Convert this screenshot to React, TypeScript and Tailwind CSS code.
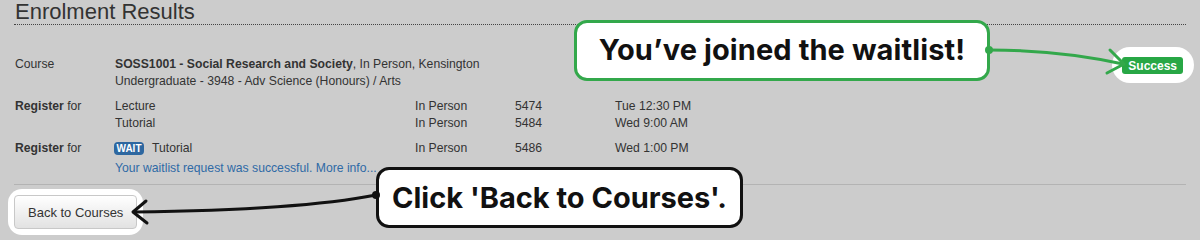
import React from "react";

export default function App() {
  return (
    <div className="relative h-[240px] w-[1200px] overflow-hidden bg-[#cccccc] font-['Liberation_Sans',Arial,sans-serif] text-[12.2px] leading-[17px] text-[#333333]">
      <div className="px-[14px]">
        <h2 className="h-[25px] border-b border-dotted border-[#444] pl-px text-[22px] font-normal leading-[23px] text-[#333]">
          Enrolment Results
        </h2>

        <div className="mt-[31px] pl-px">
          {/* Course row */}
          <div className="flex">
            <div className="w-[100px]">Course</div>
            <div>
              <div>
                <span className="font-bold">SOSS1001 - Social Research and Society</span>, In Person, Kensington
              </div>
              <div>Undergraduate - 3948 - Adv Science (Honours) / Arts</div>
            </div>
            <div className="ml-auto mr-[3px] mt-[1px]">
              <div className="relative inline-block">
                <div className="absolute -bottom-[9px] -left-[10px] -right-[11px] -top-[10px] rounded-[18px] bg-white" />
                <span className="relative flex h-[17px] items-center rounded-[3px] bg-[#28a745] px-[6px] text-[12px] font-bold leading-none text-white">
                  Success
                </span>
              </div>
            </div>
          </div>

          {/* Register row 1 */}
          <div className="mt-[8px] grid grid-cols-[100px_300px_100px_100px_1fr]">
            <div>
              <span className="font-bold">Register</span> for
            </div>
            <div>Lecture</div>
            <div>In Person</div>
            <div>5474</div>
            <div>Tue 12:30 PM</div>
            <div />
            <div>Tutorial</div>
            <div>In Person</div>
            <div>5484</div>
            <div>Wed 9:00 AM</div>
          </div>

          {/* Register row 2 */}
          <div className="mt-[8px] grid grid-cols-[100px_300px_100px_100px_1fr]">
            <div>
              <span className="font-bold">Register</span> for
            </div>
            <div className="flex items-center">
              <span className="-ml-px flex h-[13px] w-[30px] items-center justify-center rounded-[4px] bg-[#2d67a0] text-[10px] font-bold leading-none text-white">
                WAIT
              </span>
              <span className="ml-[8px]">Tutorial</span>
            </div>
            <div>In Person</div>
            <div>5486</div>
            <div>Wed 1:00 PM</div>
            <div />
            <div className="col-span-4 mt-[3px] text-[#2f6aa6]">Your waitlist request was successful. More info...</div>
          </div>
        </div>

        <div className="mt-[7px] border-t border-[#b3b3b3]" />

        <div className="mt-[10px]">
          <div className="relative inline-block">
            <div className="absolute -inset-[6px] rounded-[14px] bg-white" />
            <button className="relative h-[34px] rounded-[4px] border border-[#c8c8c8] bg-gradient-to-b from-[#ffffff] to-[#e2e2e2] px-[13px] text-[13px] leading-[17px] text-[#333]">
              Back to Courses
            </button>
          </div>
        </div>
      </div>

      {/* Callout 1 */}
      <div className="absolute left-[574px] top-[20px] flex h-[61px] w-[416px] items-center justify-center rounded-[13px] border-[3px] border-[#33a84b] bg-white pb-[3px] font-['Inter',sans-serif] text-[29px] font-bold leading-none tracking-[0.1px] text-[#111]">
        You’ve joined the waitlist!
      </div>

      {/* Callout 2 */}
      <div className="absolute left-[376px] top-[167px] flex h-[61px] w-[367px] items-center justify-center rounded-[13px] border-[3px] border-[#111] bg-white pb-[1px] font-['Inter',sans-serif] text-[29px] font-bold leading-none text-[#111]">
        Click 'Back to Courses'.
      </div>

      <svg className="pointer-events-none absolute left-0 top-0" width="1200" height="240" viewBox="0 0 1200 240">
        <circle cx="989" cy="50" r="4" fill="#33a84b" />
        <path d="M989 50 Q1060 50 1123 64" fill="none" stroke="#33a84b" strokeWidth="3" strokeLinecap="round" />
        <path d="M1110 50 L1124 64 L1107 73" fill="none" stroke="#33a84b" strokeWidth="3" strokeLinecap="round" strokeLinejoin="round" />

        <circle cx="376" cy="195" r="4" fill="#111" />
        <path d="M376 195 Q300 210 134 212" fill="none" stroke="#111" strokeWidth="3" strokeLinecap="round" />
        <path d="M146 201 L133 212 L147 223" fill="none" stroke="#111" strokeWidth="3" strokeLinecap="round" strokeLinejoin="round" />
      </svg>
    </div>
  );
}
